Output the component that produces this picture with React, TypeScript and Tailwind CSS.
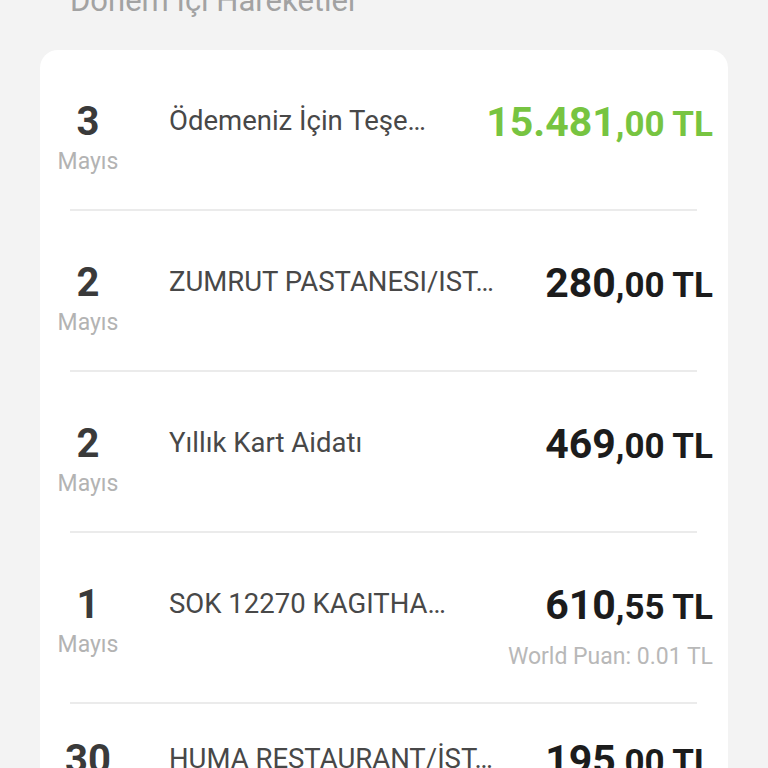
const rows = [
  { day: "3", desc: "Ödemeniz İçin Teşe…", whole: "15.481", cents: ",00 TL", green: true, pt: "pt-[50px]" },
  { day: "2", desc: "ZUMRUT PASTANESI/IST…", whole: "280", cents: ",00 TL", pt: "pt-[50px]" },
  { day: "2", desc: "Yıllık Kart Aidatı", whole: "469", cents: ",00 TL", pt: "pt-[50px]" },
  { day: "1", desc: "SOK 12270 KAGITHA…", whole: "610", cents: ",55 TL", puan: "World Puan: 0.01 TL", pt: "pt-[50px]" },
  { day: "30", desc: "HUMA RESTAURANT/İST…", whole: "195", cents: ",00 TL", pt: "pt-[34px]", month: "Nisan" },
];

type Row = (typeof rows)[number] & { green?: boolean; puan?: string; month?: string };

function TxRow({ row, last }: { row: Row; last: boolean }) {
  return (
    <div>
      <div className={`flex items-start pb-[29px] pr-[15px] ${row.pt}`}>
        <div className="flex w-[96px] shrink-0 flex-col items-center">
          <span className="text-[40px] font-bold leading-[44px] text-[#3a3a3a]">{row.day}</span>
          <span className="text-[23px] leading-[36px] text-[#b3b3b3]">{row.month ?? "Mayıs"}</span>
        </div>
        <div className="ml-[33px] min-w-0 flex-1 pt-[5px]">
          <p className="whitespace-nowrap text-[27.5px] leading-[32px] text-[#484848]">{row.desc}</p>
        </div>
        <div className="flex shrink-0 flex-col items-end">
          <p
            className={`whitespace-nowrap font-bold leading-[44px] ${
              row.green ? "text-[#77c441]" : "text-[#1c1c1c]"
            }`}
          >
            <span className="text-[41px]">{row.whole}</span>
            <span className="text-[35px]">{row.cents}</span>
          </p>
          {row.puan && (
            <p className="mt-[5px] whitespace-nowrap text-[23px] leading-[32px] text-[#b8b8b8]">{row.puan}</p>
          )}
        </div>
      </div>
      {!last && <div className="ml-[30px] mr-[31px] h-[2px] bg-[#ebebeb]" />}
    </div>
  );
}

export default function App() {
  return (
    <div
      className="h-[768px] overflow-hidden bg-[#f3f3f3] px-[40px]"
      style={{ fontFamily: "Roboto, 'Noto Sans', sans-serif" }}
    >
      <h2 className="-mt-[17px] ml-[30px] text-[31px] font-normal leading-[36px] text-[#a2a2a2]">
        Dönem İçi Hareketler
      </h2>
      <div className="mt-[31px] rounded-[18px] bg-white">
        {rows.map((r, i) => (
          <TxRow key={i} row={r as Row} last={i === rows.length - 1} />
        ))}
      </div>
    </div>
  );
}
